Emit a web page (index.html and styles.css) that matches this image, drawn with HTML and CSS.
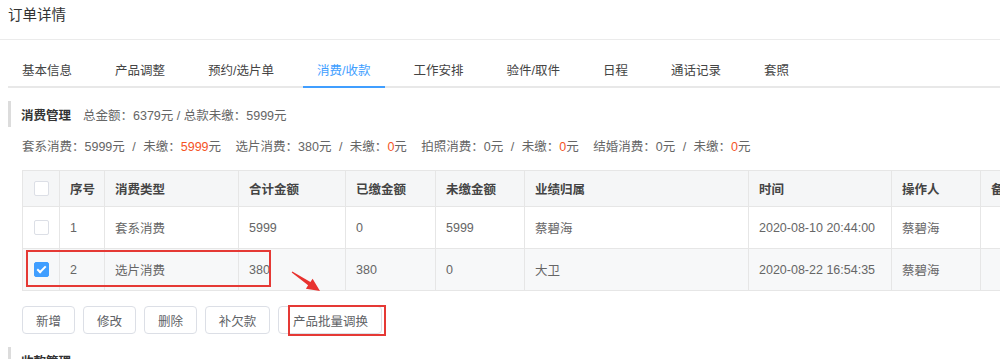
FILE: index.html
```html
<!DOCTYPE html>
<html lang="zh-CN">
<head>
    <meta charset="UTF-8">
    <title>订单详情</title>
    <link rel="stylesheet" href="styles.css">
</head>
<body>

    <div class="page-title">订单详情</div>

    <div class="tabs">
        <div class="tab">基本信息</div>
        <div class="tab">产品调整</div>
        <div class="tab">预约/选片单</div>
        <div class="tab active">消费/收款</div>
        <div class="tab">工作安排</div>
        <div class="tab">验件/取件</div>
        <div class="tab">日程</div>
        <div class="tab">通话记录</div>
        <div class="tab">套照</div>
    </div>

    <div class="section-head">
        <span class="section-name">消费管理</span>
        <span class="section-sum">总金额：6379元 / 总款未缴：5999元</span>
    </div>

    <div class="summary">
        <span class="group">套系消费：5999元 <i>/</i> 未缴：<em>5999</em>元</span>
        <span class="group">选片消费：380元 <i>/</i> 未缴：<em>0</em>元</span>
        <span class="group">拍照消费：0元 <i>/</i> 未缴：<em>0</em>元</span>
        <span class="group">结婚消费：0元 <i>/</i> 未缴：<em>0</em>元</span>
    </div>

    <div class="table-wrap">
        <table class="grid">
            <colgroup>
                <col style="width:37px">
                <col style="width:45px">
                <col style="width:134px">
                <col style="width:107px">
                <col style="width:90px">
                <col style="width:89px">
                <col style="width:224px">
                <col style="width:143px">
                <col style="width:89px">
                <col style="width:120px">
            </colgroup>
            <thead>
                <tr>
                    <th class="chk"><span class="box"></span></th>
                    <th>序号</th>
                    <th>消费类型</th>
                    <th>合计金额</th>
                    <th>已缴金额</th>
                    <th>未缴金额</th>
                    <th>业绩归属</th>
                    <th>时间</th>
                    <th>操作人</th>
                    <th>备注</th>
                </tr>
            </thead>
            <tbody>
                <tr>
                    <td class="chk"><span class="box"></span></td>
                    <td>1</td>
                    <td>套系消费</td>
                    <td>5999</td>
                    <td>0</td>
                    <td>5999</td>
                    <td>蔡碧海</td>
                    <td>2020-08-10 20:44:00</td>
                    <td>蔡碧海</td>
                    <td></td>
                </tr>
                <tr class="selected">
                    <td class="chk"><span class="box checked"></span></td>
                    <td>2</td>
                    <td>选片消费</td>
                    <td>380</td>
                    <td>380</td>
                    <td>0</td>
                    <td>大卫</td>
                    <td>2020-08-22 16:54:35</td>
                    <td>蔡碧海</td>
                    <td></td>
                </tr>
            </tbody>
        </table>
        <div class="mark-row"></div>
        <svg class="arrow" width="34" height="26" viewBox="0 0 34 26">
            <path d="M2.3 2.6 L20.4 13.05 L22.6 9.7 L30 22 L15.9 19.7 L18.1 16.35 L1.7 3.4 Z" fill="#e8322f"/>
        </svg>
    </div>

    <div class="actions">
        <button class="btn">新增</button>
        <button class="btn">修改</button>
        <button class="btn">删除</button>
        <button class="btn wide">补欠款</button>
        <button class="btn marked">产品批量调换</button>
    </div>

    <div class="section-head">
        <span class="section-name">收款管理</span>
    </div>

</body>
</html>
```

FILE: styles.css
```css
body {
    margin: 0;
    font-family: "Liberation Sans", "Noto Sans CJK SC", sans-serif;
    color: #606266;
    background: #fff;
    overflow: hidden;
    width: 1000px;
}
.page-title {
    height: 39px;
    line-height: 30px;
    padding-left: 8px;
    font-size: 14.5px;
    color: #333;
    border-bottom: 1px solid #ebebeb;
}
.tabs {
    display: flex;
    margin: 16px 0 0 8px;
    height: 30px;
    border-bottom: 2px solid #e8e8e8;
}
.tab {
    padding: 0 14px;
    margin-right: 15px;
    font-size: 12.5px;
    line-height: 30px;
    color: #444;
    white-space: nowrap;
}
.tab.active {
    color: #409eff;
    border-bottom: 2px solid #409eff;
    margin-bottom: -2px;
}
.section-head {
    display: flex;
    align-items: center;
    margin: 13px 0 0 8px;
    height: 26px;
    border-left: 3px solid #dcdcdc;
    padding-left: 10px;
    font-size: 12.5px;
}
.section-name {
    font-weight: bold;
    color: #333;
    margin-right: 12px;
}
.section-sum {
    color: #666;
}
.summary {
    margin: 9px 0 0 22px;
    font-size: 12.5px;
    color: #666;
    white-space: nowrap;
}
.summary .group {
    margin-right: 11px;
}
.summary i {
    font-style: normal;
    margin: 0 4px;
}
.summary em {
    font-style: normal;
    color: #f5541f;
}
.table-wrap {
    position: relative;
    margin: 15px 0 0 22px;
}
.grid {
    border-collapse: collapse;
    table-layout: fixed;
    width: 1078px;
    font-size: 12.5px;
    border-top: 1px solid #e6e6e6;
    border-left: 1px solid #e6e6e6;
}
.grid th,
.grid td {
    text-align: left;
    padding: 0 10px;
    border-right: 1px solid #e6e6e6;
    border-bottom: 1px solid #e6e6e6;
    white-space: nowrap;
}
.grid th {
    height: 35px;
    background: #f5f6f7;
    color: #444;
    font-weight: bold;
}
.grid td {
    height: 41px;
    color: #666;
}
.grid tr.selected td {
    background: #f7f8f9;
}
.grid .chk {
    padding: 0 0 0 11px;
}
.box {
    display: block;
    width: 13px;
    height: 13px;
    border: 1px solid #dcdfe6;
    border-radius: 2px;
    background: #fff;
}
.box.checked {
    background: #409eff;
    border-color: #409eff;
    position: relative;
}
.box.checked::after {
    content: "";
    position: absolute;
    left: 4px;
    top: 1px;
    width: 3px;
    height: 7px;
    border: solid #fff;
    border-width: 0 2px 2px 0;
    transform: rotate(45deg);
}
.mark-row {
    position: absolute;
    left: 4px;
    top: 80px;
    width: 241px;
    height: 33px;
    border: 2px solid #e53935;
}
.arrow {
    position: absolute;
    left: 268px;
    top: 99px;
}
.actions {
    display: flex;
    gap: 8px;
    margin: 15px 0 0 22px;
}
.btn {
    height: 28px;
    width: 53px;
    padding: 0;
    border: 1px solid #dcdfe6;
    border-radius: 4px;
    background: #fff;
    color: #606266;
    font-family: inherit;
    font-size: 12.5px;
}
.btn.wide {
    width: 65px;
}
.btn.marked {
    width: 104px;
    position: relative;
    text-align: right;
    padding-right: 13px;
}
.btn.marked::after {
    content: "";
    position: absolute;
    left: 9px;
    top: -2px;
    width: 94px;
    height: 27px;
    border: 2px solid #e53935;
}
```
